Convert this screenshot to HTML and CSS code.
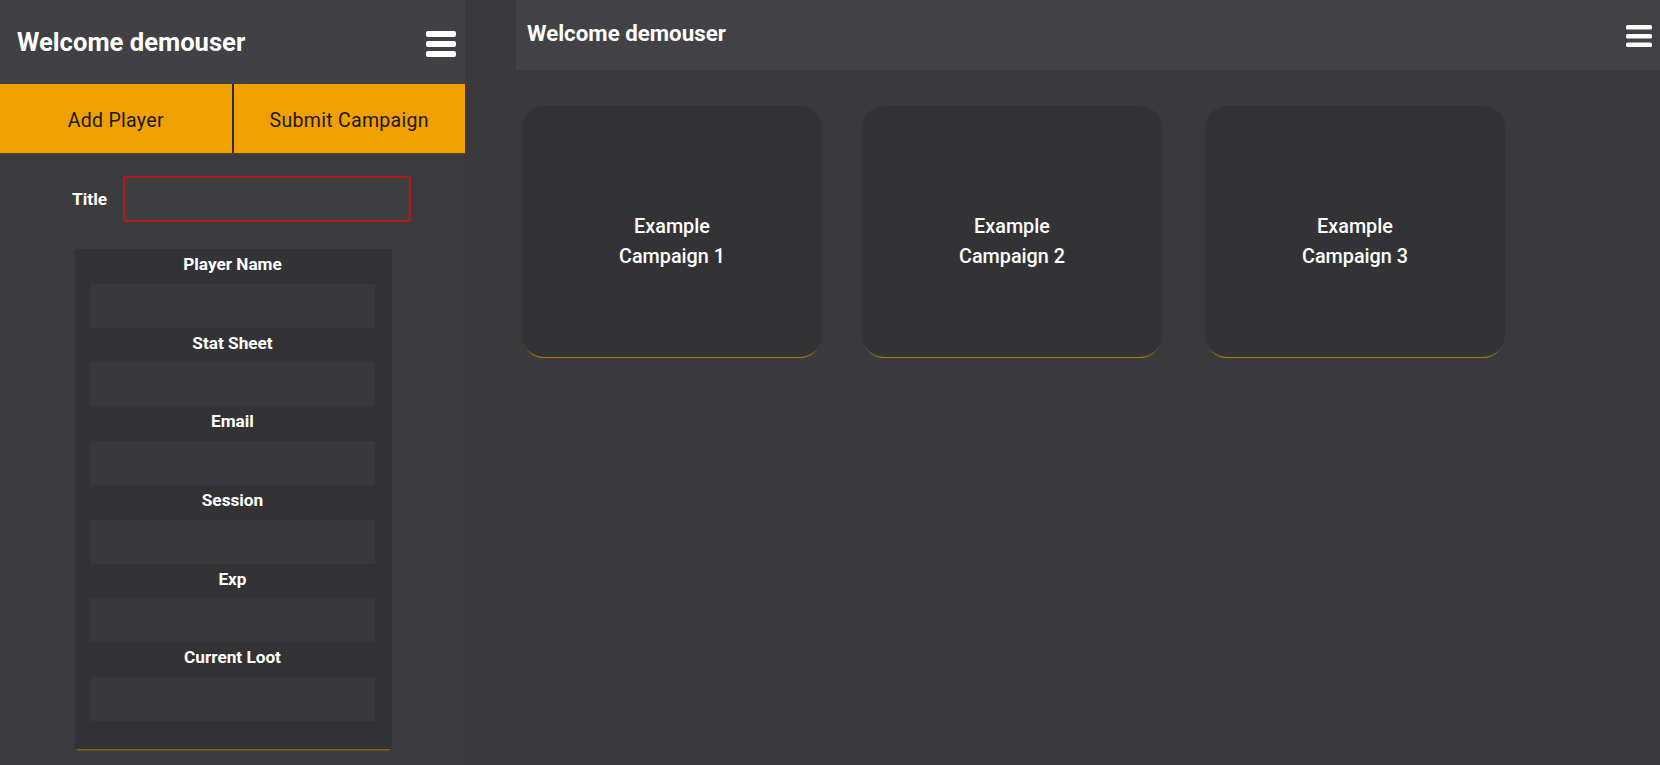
FILE: index.html
```html
<!DOCTYPE html>
<html lang="en">
<head>
<meta charset="utf-8">
<title>Campaigns</title>
<link rel="stylesheet" href="styles.css">
</head>
<body>
<div class="app">
  <aside class="sidebar">
    <header class="side-header">
      <h1 class="side-title">Welcome demouser</h1>
      <svg class="burger burger-lg" viewBox="0 0 30 26" aria-hidden="true">
        <rect x="0" y="0" width="30" height="6" rx="2" fill="#fff"/>
        <rect x="0" y="10" width="30" height="6" rx="2" fill="#fff"/>
        <rect x="0" y="20" width="30" height="6" rx="2" fill="#fff"/>
      </svg>
    </header>
    <div class="actions">
      <button class="action">Add Player</button>
      <button class="action">Submit Campaign</button>
    </div>
    <div class="title-row">
      <label class="title-label">Title</label>
      <input class="title-input" type="text">
    </div>
    <form class="player-form">
      <label class="field-label">Player Name</label>
      <input class="field-input" type="text">
      <label class="field-label">Stat Sheet</label>
      <input class="field-input" type="text">
      <label class="field-label">Email</label>
      <input class="field-input" type="text">
      <label class="field-label">Session</label>
      <input class="field-input" type="text">
      <label class="field-label">Exp</label>
      <input class="field-input" type="text">
      <label class="field-label">Current Loot</label>
      <input class="field-input" type="text">
    </form>
  </aside>
  <main class="main">
    <header class="main-header">
      <h2 class="main-title">Welcome demouser</h2>
      <svg class="burger burger-sm" viewBox="0 0 26 22" aria-hidden="true">
        <rect x="0" y="0" width="26" height="4.5" rx="1.5" fill="#fff"/>
        <rect x="0" y="9" width="26" height="4.5" rx="1.5" fill="#fff"/>
        <rect x="0" y="17.5" width="26" height="4.5" rx="1.5" fill="#fff"/>
      </svg>
    </header>
    <section class="cards">
      <div class="card"><span>Example<br>Campaign 1</span></div>
      <div class="card"><span>Example<br>Campaign 2</span></div>
      <div class="card"><span>Example<br>Campaign 3</span></div>
    </section>
  </main>
</div>
</body>
</html>
```

FILE: styles.css
```css
* { box-sizing: border-box; }

html, body {
  margin: 0;
  padding: 0;
  height: 100%;
}

body {
  background: #3b3b3d;
  font-family: Roboto, "Liberation Sans", sans-serif;
  color: #ffffff;
  overflow: hidden;
}

.app {
  display: flex;
  height: 765px;
}

/* ---------- Sidebar ---------- */
.sidebar {
  width: 465px;
  flex: 0 0 465px;
  background: #3b3b3d;
  display: flex;
  flex-direction: column;
}

.side-header {
  height: 84px;
  background: #414045;
  display: flex;
  align-items: center;
  justify-content: space-between;
  padding: 0 9px 0 17px;
}

.side-title {
  margin: 0;
  font-size: 25.6px;
  font-weight: 700;
  color: #fff;
}

.burger { display: block; }
.burger-lg { width: 30px; height: 26px; margin-top: 4px; }
.burger-sm { width: 26px; height: 22px; margin-top: 1px; }

.actions {
  display: flex;
  height: 70px;
  background: #f0a000;
  border-bottom: 1px solid #5a4a20;
}

.action {
  flex: 1;
  border: 0;
  margin: 0;
  background: #f0a000;
  font-family: Roboto, "Liberation Sans", sans-serif;
  font-size: 19.5px;
  letter-spacing: 0.3px;
  color: #1a1a1a;
  padding: 4px 0 0 0;
}

.action + .action {
  border-left: 2px solid #2c2a26;
}

.title-row {
  display: flex;
  align-items: center;
  gap: 16px;
  padding-left: 72px;
  margin-top: 22px;
}

.title-label {
  font-size: 17.3px;
  font-weight: 700;
  color: #fff;
}

.title-input {
  width: 288px;
  height: 46px;
  background: #3f3f42;
  border: 2px solid #b2171b;
  border-radius: 2px;
  outline: none;
}

.player-form {
  margin: 27px 0 0 75px;
  width: 317px;
  background: #333335;
  padding: 0 17px 28px 15px;
  display: flex;
  flex-direction: column;
  box-shadow: 0 3px 2px -2px #a6780f;
}

.field-label {
  display: block;
  height: 34.7px;
  line-height: 30px;
  text-align: center;
  font-size: 17.2px;
  font-weight: 700;
  color: #fff;
}

.field-input {
  display: block;
  width: 100%;
  height: 44px;
  background: #39393b;
  border: 0;
  outline: none;
}

/* ---------- Main ---------- */
.main {
  flex: 1;
  display: flex;
  flex-direction: column;
  background: #3a3a3c;
}

.main-header {
  margin-left: 51px;
  height: 70px;
  background: #424146;
  display: flex;
  align-items: center;
  justify-content: space-between;
  padding: 0 8px 0 11px;
  margin-bottom: 36px;
}

.main-title {
  margin: 0 0 4px 0;
  font-size: 22.3px;
  font-weight: 700;
  color: #fff;
}

.cards {
  display: flex;
  gap: 40px;
  padding-left: 57px;
}

.card {
  width: 300px;
  height: 251px;
  background: #333335;
  border-radius: 22px;
  display: flex;
  align-items: center;
  justify-content: center;
  text-align: center;
  padding-top: 21px;
  font-size: 19.8px;
  font-weight: 500;
  line-height: 30px;
  color: #fff;
  box-shadow: 0 3px 1px -2px #b07f10;
}

.card:last-child {
  margin-left: 3px;
}
```
